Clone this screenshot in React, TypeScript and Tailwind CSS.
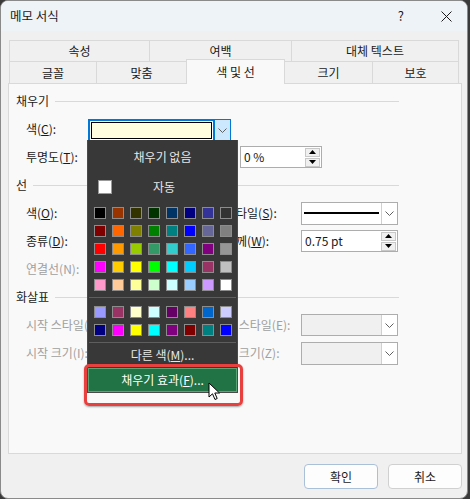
import React from 'react';

const ROW1 = [
  ['속성', 'w-[140px]'],
  ['여백', 'w-[142px]'],
  ['대체 텍스트', 'w-[168px] border-r'],
];

const SWATCHES = [
  '#000000', '#993300', '#333300', '#003300', '#003366', '#000080', '#333399', '#333333',
  '#800000', '#FF6600', '#808000', '#008000', '#008080', '#0000FF', '#666699', '#808080',
  '#FF0000', '#FF9900', '#99CC00', '#339966', '#33CCCC', '#3366FF', '#800080', '#969696',
  '#FF00FF', '#FFCC00', '#FFFF00', '#00FF00', '#00FFFF', '#00CCFF', '#993366', '#C0C0C0',
  '#FF99CC', '#FFCC99', '#FFFF99', '#CCFFCC', '#CCFFFF', '#99CCFF', '#CC99FF', '#FFFFFF',
];

const RECENT = [
  '#9999FF', '#993366', '#FFFFCC', '#CCFFFF', '#660066', '#FF8080', '#0066CC', '#CCCCFF',
  '#000080', '#FF00FF', '#FFFF00', '#00FFFF', '#800080', '#800000', '#008080', '#0000FF',
];

function Chevron() {
  return (
    <svg width="9" height="5" viewBox="0 0 9 5">
      <polyline points="0.5,0.5 4.5,4.5 8.5,0.5" fill="none" stroke="#606060" strokeWidth="1" />
    </svg>
  );
}

function Spin() {
  return (
    <div className="flex flex-col gap-[1px] w-[15px] mr-[1px]">
      <div className="h-[9px] bg-[#f0f0f0] border border-[#c8c8c8] flex items-center justify-center">
        <svg width="7" height="4" viewBox="0 0 7 4"><polygon points="3.5,0 7,4 0,4" fill="#000" /></svg>
      </div>
      <div className="h-[9px] bg-[#f0f0f0] border border-[#c8c8c8] flex items-center justify-center">
        <svg width="7" height="4" viewBox="0 0 7 4"><polygon points="0,0 7,0 3.5,4" fill="#000" /></svg>
      </div>
    </div>
  );
}

function Header({ text }: { text: string }) {
  return (
    <div className="h-[28px] flex items-center">
      <span>{text}</span>
      <div className="flex-1 h-px bg-[#d9d9d9] ml-[6px]" />
    </div>
  );
}

function Swatch({ c }: { c: string }) {
  return <div className="w-[12px] h-[12px] border border-[#8c8c8c]" style={{ backgroundColor: c }} />;
}

export default function App() {
  return (
    <div className="w-[470px] h-[499px] bg-[#3a3a3a] font-['Noto_Sans_CJK_KR','Noto_Sans',sans-serif] text-[12px] text-[#1a1a1a]">
      <div className="w-[468px] h-[499px] rounded-[8px] border border-[#8a8a8a] bg-[#f0f0f0] overflow-hidden flex flex-col">
        {/* title bar */}
        <div className="h-[30px] bg-[#eef3f8] flex items-center pl-[9px] shrink-0">
          <span className="text-[12.5px]">메모 서식</span>
          <span className="ml-auto mr-[37px] text-[13px]">?</span>
          <svg className="mr-[15px]" width="11" height="11" viewBox="0 0 11 11">
            <path d="M0.5 0.5 L10.5 10.5 M10.5 0.5 L0.5 10.5" stroke="#1a1a1a" strokeWidth="1" />
          </svg>
        </div>

        <div className="pt-[9px] px-[7px] flex flex-col">
          {/* tabs */}
          <div className="flex h-[21px] ml-[1px]">
            {ROW1.map(([t, cls]) => (
              <div key={t} className={`${cls} border-l border-t border-[#d9d9d9] flex items-center justify-center`}>{t}</div>
            ))}
          </div>
          <div className="flex h-[22px] ml-[1px] items-end">
            <div className="w-[87px] h-[22px] border-l border-t border-[#d9d9d9] flex items-center justify-center">글꼴</div>
            <div className="w-[90px] h-[22px] border-l border-t border-[#d9d9d9] flex items-center justify-center">맞춤</div>
            <div className="w-[99px] h-[25px] -mb-[1px] relative z-10 bg-[#f9f9f9] border-l border-t border-r border-[#d9d9d9] flex items-center justify-center">색 및 선</div>
            <div className="w-[87px] h-[22px] border-t border-[#d9d9d9] flex items-center justify-center">크기</div>
            <div className="w-[87px] h-[22px] border-l border-t border-r border-[#d9d9d9] flex items-center justify-center">보호</div>
          </div>

          {/* panel */}
          <div className="relative w-[454px] h-[371px] bg-[#f9f9f9] border border-[#d9d9d9] pt-[3px] pl-[7px]">
            <div className="w-[383px] flex flex-col">
              <Header text="채우기" />
              <div className="h-[28px] flex items-center pl-[10px]">
                <span className="w-[62px]">색(<u>C</u>):</span>
                <div className="flex h-[23px] mt-[3px]">
                  <div className="w-[127px] border-2 border-[#0078d4] bg-white p-px">
                    <div className="w-full h-full bg-[#ffffe0] border border-black" />
                  </div>
                  <div className="w-[16px] bg-[#cce8ff] border border-[#0078d4] border-l-0 flex items-center justify-center">
                    <Chevron />
                  </div>
                </div>
              </div>
              <div className="h-[28px] flex items-center pl-[10px]">
                <span className="w-[62px]">투명도(<u>T</u>):</span>
                <div className="ml-[152px] w-[82px] h-[22px] bg-white border border-[#adadad] flex items-center pl-[3px]">
                  <span className="flex-1">0 %</span>
                  <Spin />
                </div>
              </div>

              <Header text="선" />
              <div className="h-[28px] flex items-center pl-[10px]">
                <span className="w-[62px]">색(<u>O</u>):</span>
                <div className="w-[137px]" />
                <span className="w-[76px]">스타일(<u>S</u>):</span>
                <div className="w-[97px] h-[23px] bg-white border border-[#adadad] flex">
                  <div className="flex-1 flex items-center px-[2px]">
                    <div className="w-full h-[1.5px] bg-black" />
                  </div>
                  <div className="w-[16px] border-l border-[#d0d0d0] flex items-center justify-center">
                    <Chevron />
                  </div>
                </div>
              </div>
              <div className="h-[28px] flex items-center pl-[10px]">
                <span className="w-[62px]">종류(<u>D</u>):</span>
                <div className="w-[137px]" />
                <span className="w-[76px]">두께(<u>W</u>):</span>
                <div className="w-[97px] h-[22px] bg-white border border-[#adadad] flex items-center pl-[3px]">
                  <span className="flex-1">0.75 pt</span>
                  <Spin />
                </div>
              </div>
              <div className="h-[28px] flex items-center pl-[10px] text-[#a0a0a0]">
                <span className="w-[62px]">연결선(N):</span>
              </div>

              <Header text="화살표" />
              <div className="h-[28px] flex items-center pl-[10px] text-[#a0a0a0]">
                <span className="w-[199px]">시작 스타일(B):</span>
                <span className="w-[76px]">끝 스타일(E):</span>
                <div className="w-[97px] h-[22px] bg-[#f0f0f0] border border-[#adadad] flex justify-end">
                  <div className="w-[16px] bg-white border-l border-[#d0d0d0] flex items-center justify-center"><Chevron /></div>
                </div>
              </div>
              <div className="h-[28px] flex items-center pl-[10px] text-[#a0a0a0]">
                <span className="w-[199px]">시작 크기(I):</span>
                <span className="w-[76px]">끝 크기(Z):</span>
                <div className="w-[97px] h-[23px] bg-[#f0f0f0] border border-[#adadad] flex justify-end">
                  <div className="w-[16px] bg-white border-l border-[#d0d0d0] flex items-center justify-center"><Chevron /></div>
                </div>
              </div>
            </div>

            {/* colour dropdown */}
            <div className="absolute left-[78px] top-[56px] w-[151px] h-[253px] bg-[#383838] border border-[#4a4a4a] border-t-0 flex flex-col text-[#e8e8e8]">
              <div className="h-[33px] flex items-center justify-center">채우기 없음</div>
              <div className="h-[28px] flex items-center">
                <div className="ml-[10px] w-[14px] h-[14px] bg-white border border-[#9a9a9a]" />
                <span className="ml-[41px]">자동</span>
              </div>
              <div className="mt-[6px] pl-[6px] grid grid-cols-[repeat(8,12px)] gap-[6px]">
                {SWATCHES.map((c, i) => <Swatch key={i} c={c} />)}
              </div>
              <div className="mt-[6px] mx-[1px] h-px bg-[#5e5e5e]" />
              <div className="mt-[8px] pl-[6px] grid grid-cols-[repeat(8,12px)] gap-[6px]">
                {RECENT.map((c, i) => <Swatch key={i} c={c} />)}
              </div>
              <div className="mt-[6px] mx-[1px] h-px bg-[#5e5e5e]" />
              <div className="h-[24px] flex items-center justify-center">다른 색(<u>M</u>)...</div>
              <div className="mt-auto h-[24px] bg-[#217346] border border-[#5aa478] flex items-center justify-center text-white">
                채우기 효과(<u>F</u>)...
              </div>
            </div>

            {/* highlight box */}
            <div className="absolute left-[75px] top-[280px] w-[159px] h-[42px] border-[3px] border-[#e8403e] rounded-[5px] shadow-[0_1px_2px_rgba(0,0,0,0.35)]" />

            {/* cursor */}
            <svg className="absolute left-[199px] top-[298px]" width="13" height="19" viewBox="0 0 13 19">
              <path d="M1 1 L1 15 L4.5 11.8 L7 17.5 L9.2 16.5 L6.8 11 L11.5 11 Z" fill="#fff" stroke="#000" strokeWidth="1" strokeLinejoin="round" />
            </svg>
          </div>

          {/* buttons */}
          <div className="w-[454px] flex justify-end gap-[10px] mt-[10px]">
            <button className="w-[74px] h-[25px] bg-[#fdfdfd] border border-[#a9c0d8] rounded-[4px] text-[12px]">확인</button>
            <button className="w-[74px] h-[25px] bg-[#fdfdfd] border border-[#d0d0d0] rounded-[4px] text-[12px]">취소</button>
          </div>
        </div>
      </div>
    </div>
  );
}
